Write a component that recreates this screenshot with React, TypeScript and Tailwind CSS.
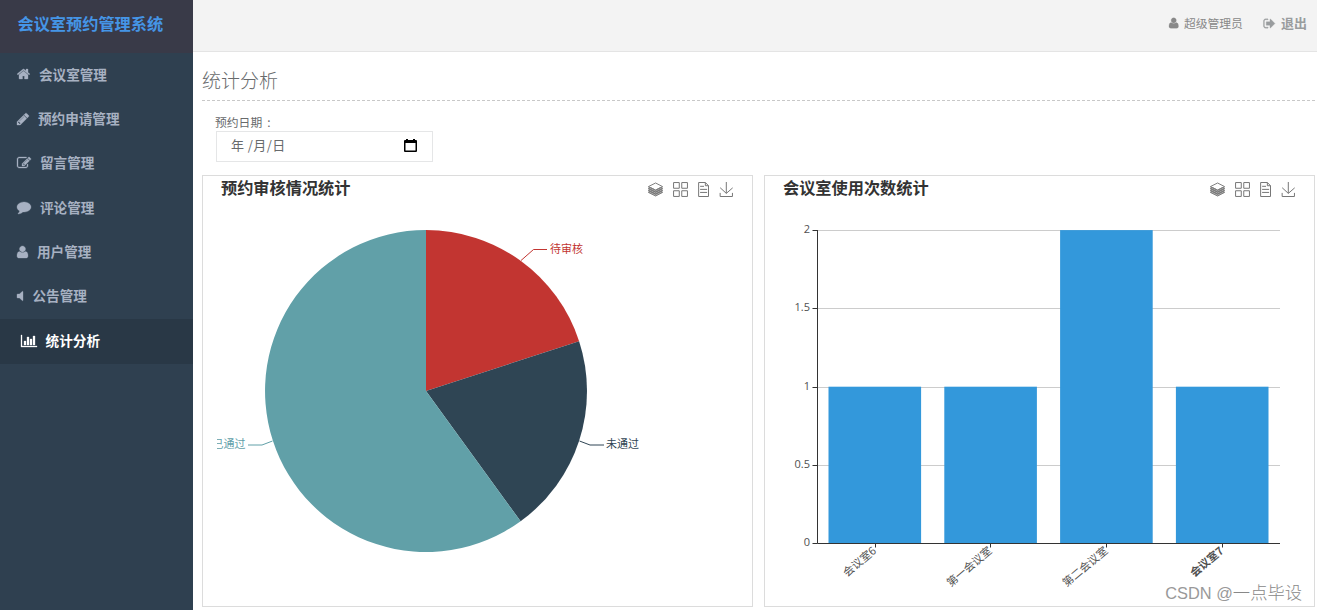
import React, { useState } from 'react';

// --- Icons ---
const ICONS = {
  home: { x: 64, w: 1664, d: 'M1472 992v480q0 26-19 45t-45 19h-384v-384h-256v384h-384q-26 0-45-19t-19-45v-480q0-1 .5-3t.5-3l575-474 575 474q1 2 1 6zm223-69l-62 74q-8 9-21 11h-3q-13 0-21-7l-692-577-692 577q-12 8-24 7-13-2-21-11l-62-74q-8-10-7-23.5t11-21.5l719-599q32-26 76-26t76 26l244 204v-195q0-14 9-23t23-9h192q14 0 23 9t9 23v408l219 182q10 8 11 21.5t-7 23.5z' },
  pencil: { x: 128, w: 1536, d: 'M491 1536l91-91-235-235-91 91v107h128v128h107zm523-928q0-22-22-22-10 0-17 7l-542 542q-7 7-7 17 0 22 22 22 10 0 17-7l542-542q7-7 7-17zm-54-192l416 416-832 832h-416v-416zm683 96q0 53-37 90l-166 166-416-416 166-165q36-38 90-38 53 0 91 38l235 234q37 39 37 91z' },
  edit: { x: 0, w: 1792, d: 'M888 1184l116-116-152-152-116 116v56h96v96h56zm440-720q-16-16-33 1l-350 350q-17 17-1 33t33-1l350-350q17-17 1-33zm80 594v190q0 119-84.5 203.5t-203.5 84.5h-832q-119 0-203.5-84.5t-84.5-203.5v-832q0-119 84.5-203.5t203.5-84.5h832q63 0 117 25 15 7 18 23 3 17-9 29l-49 49q-14 14-32 8-23-6-45-6h-832q-66 0-113 47t-47 113v832q0 66 47 113t113 47h832q66 0 113-47t47-113v-126q0-13 9-22l64-64q15-15 35-7t20 29zm-96-738l288 288-672 672h-288v-288zm444 132l-92 92-288-288 92-92q28-28 68-28t68 28l152 152q28 28 28 68t-28 68z' },
  comment: { x: 0, w: 1792, d: 'M1792 896q0 174-120 321.5t-326 233-450 85.5q-70 0-145-8-198 175-460 242-49 14-114 22-17 2-30.5-9t-17.5-29v-1q-3-4-.5-12t2-10 4.5-9.5l6-9 7-8.5 8-9q7-8 31-34.5t34.5-38 31-39.5 32.5-51 27-59 26-76q-157-89-247.5-220t-90.5-281q0-130 71-248.5t191-204.5 286-136.5 348-50.5q244 0 450 85.5t326 233 120 321.5z' },
  user: { x: 192, w: 1408, d: 'M1600 1405q0 120-73 189.5t-194 69.5h-874q-121 0-194-69.5t-73-189.5q0-53 3.5-103.5t14-109 26.5-108.5 43-97.5 62-81 85.5-53.5 111.5-20q9 0 42 21.5t74.5 48 108 48 133.5 21.5 133.5-21.5 108-48 74.5-48 42-21.5q61 0 111.5 20t85.5 53.5 62 81 43 97.5 26.5 108.5 14 109 3.5 103.5zm-320-893q0 159-112.5 271.5t-271.5 112.5-271.5-112.5-112.5-271.5 112.5-271.5 271.5-112.5 271.5 112.5 112.5 271.5z' },
  volume: { x: 512, w: 832, d: 'M1280 352v1088q0 26-19 45t-45 19-45-19l-333-333h-262q-26 0-45-19t-19-45v-384q0-26 19-45t45-19h262l333-333q19-19 45-19t45 19 19 45z' },
  chart: { x: 0, w: 2048, d: 'M640 896v512h-256v-512h256zm384-512v1024h-256v-1024h256zm1024 1152v128h-2048v-1536h128v1408h1920zm-640-896v768h-256v-768h256zm384-384v1152h-256v-1152h256z' },
  signOut: { x: 0, w: 1664, d: 'M704 1440q0 4 1 20t.5 26.5-3 23.5-10 19.5-20.5 6.5h-320q-119 0-203.5-84.5t-84.5-203.5v-704q0-119 84.5-203.5t203.5-84.5h320q13 0 22.5 9.5t9.5 22.5q0 4 1 20t.5 26.5-3 23.5-10 19.5-20.5 6.5h-320q-66 0-113 47t-47 113v704q0 66 47 113t113 47h312l11.5 1 11.5 3 8 5.5 7 9 2 13.5zm928-544q0 26-19 45l-544 544q-19 19-45 19t-45-19-19-45v-288h-448q-26 0-45-19t-19-45v-384q0-26 19-45t45-19h448v-288q0-26 19-45t45-19 45 19l544 544q19 19 19 45z' },
};

type IconName = keyof typeof ICONS;

const Icon: React.FC<{ name: IconName; size?: number }> = ({ name, size = 14 }) => {
  const { x, w, d } = ICONS[name];
  return (
    <svg className="shrink-0 overflow-visible" width={(w / 1792) * size} height={size} viewBox={`${x} 0 ${w} 1792`} fill="currentColor" stroke="currentColor" strokeWidth="40">
      <path d={d} />
    </svg>
  );
};

const menu: { icon: IconName; label: string }[] = [
  { icon: 'home', label: '会议室管理' },
  { icon: 'pencil', label: '预约申请管理' },
  { icon: 'edit', label: '留言管理' },
  { icon: 'comment', label: '评论管理' },
  { icon: 'user', label: '用户管理' },
  { icon: 'volume', label: '公告管理' },
  { icon: 'chart', label: '统计分析' },
];

// --- Chart toolbox ---
const Toolbox: React.FC = () => (
  <div className="flex items-center text-[#777]">
    <svg className="w-[15px] h-[15px] mr-[10px]" viewBox="-2 0 64 60" fill="none" stroke="currentColor" strokeWidth="4">
      <path d="M-.2 17.5V42.5L30.4 57.8 60 42.5V17.5L30.4 32.7Z" fill="currentColor" fillOpacity="0.6" stroke="none" />
      <path d="M8.2,38.4l-8.4,4.1l30.6,15.3L60,42.5l-8.1-4.1l-21.5,11L8.2,38.4z M51.9,30l-8.1,4.2l-13.4,6.9l-13.9-6.9L8.2,30l-8.4,4.2l8.4,4.2l22.2,11l21.5-11l8.1-4.2L51.9,30z M51.9,21.7l-8.1,4.2L35.7,30l-5.3,2.8L24.9,30l-8.4-4.1l-8.3-4.2l-8.4,4.2L8.2,30l8.3,4.2l13.9,6.9l13.4-6.9l8.1-4.2l8.1-4.1L51.9,21.7zM30.4,2.2L-0.2,17.5l8.4,4.1l8.3,4.2l8.4,4.2l5.5,2.7l5.3-2.7l8.1-4.2l8.1-4.2l8.1-4.1L30.4,2.2z" />
    </svg>
    <svg className="w-[15px] h-[15px] mr-[9px]" viewBox="0 0 60 60" fill="none" stroke="currentColor" strokeWidth="4">
      <path d="M2.3,2.2h22.8V25H2.3V2.2z M35,2.2h22.8V25H35V2.2zM2.3,35h22.8v22.8H2.3V35z M35,35h22.8v22.8H35V35z" />
    </svg>
    <svg className="w-[13px] h-[15px] mr-[9px]" viewBox="5 0 52 60" fill="none" stroke="currentColor" strokeWidth="4">
      <path d="M17.5,17.3H33 M45.4,29.5h-28 M11.5,2v56H51V14.8L38.4,2H11.5z M38.4,2.2v12.7H51 M45.4,41.7h-28" />
    </svg>
    <svg className="w-[15px] h-[15px]" viewBox="0 0 60 60" fill="none" stroke="currentColor" strokeWidth="4">
      <path d="M4.7,22.9L29.3,45.5L54.7,23.4M4.6,43.6L4.6,58L53.8,58L53.8,43.6M29.2,45.1L29.2,0" />
    </svg>
  </div>
);

const Panel: React.FC<{ title: string; children: React.ReactNode }> = ({ title, children }) => (
  <section className="w-[551px] h-[432px] border border-[#dcdcdc] overflow-hidden">
    <div className="h-[26px] pl-[18px] pr-[18px] flex items-center justify-between">
      <h2 className="pb-1 text-[16.2px] leading-[22px] font-bold text-[#333]">{title}</h2>
      <Toolbox />
    </div>
    {children}
  </section>
);

const PieChart: React.FC = () => (
  <svg className="block" width="549" height="404" viewBox="203 202 549 404" fontSize="11">
    <path d="M426 391V230A161 161 0 0 1 579.1 341.2Z" fill="#c23531" />
    <path d="M426 391L579.1 341.2A161 161 0 0 1 520.6 521.3Z" fill="#2f4554" />
    <path d="M426 391L520.6 521.3A161 161 0 1 1 426 230Z" fill="#61a0a8" />
    <path d="M521 260.5L533.5 249.5H547" fill="none" stroke="#c23531" />
    <path d="M579.5 441L590 445H604" fill="none" stroke="#2f4554" />
    <path d="M272.5 441L262 445H248" fill="none" stroke="#61a0a8" />
    <text x="550" y="252.5" fill="#c23531">待审核</text>
    <text x="606" y="448" fill="#2f4554">未通过</text>
    {/* the label is cut off at the canvas edge */}
    <svg x="217" y="434" width="40" height="20">
      <text x="-4.5" y="14" fill="#61a0a8">已通过</text>
    </svg>
  </svg>
);

const rooms = [
  { name: '会议室6', count: 1 },
  { name: '第一会议室', count: 1 },
  { name: '第二会议室', count: 2 },
  { name: '会议室7', count: 1, bold: true },
];

const BarChart: React.FC = () => (
  <svg className="block" width="549" height="404" viewBox="765 202 549 404" fontSize="11" fill="#505050">
    {[0.5, 1, 1.5, 2].map(v => (
      <path key={v} d={`M818 ${Math.round(543 - v * 156.5) + 0.5}H1280`} stroke="#ccc" />
    ))}
    {rooms.map((r, i) => (
      <rect key={r.name} x={828.5 + i * 115.8} y={543.3 - r.count * 156.6} width="92.6" height={r.count * 156.6} fill="#3398db" />
    ))}
    {[0, 0.5, 1, 1.5, 2].map(v => {
      const y = Math.round(543 - v * 156.5);
      return (
        <g key={v}>
          <path d={`M812.5 ${y + 0.5}H817.5`} stroke="#333" />
          <text x="810" y={y + 3} textAnchor="end" fontFamily="'Open Sans', sans-serif">{v}</text>
        </g>
      );
    })}
    <path d="M817.5 230V543.5H1280" fill="none" stroke="#333" />
    {rooms.map((r, i) => {
      const x = 875 + i * 115.8;
      return (
        <g key={r.name}>
          <path d={`M${Math.floor(x) + 0.5} 544V547.5`} stroke="#333" />
          <text transform={`translate(${x + 2} 552) rotate(-40)`} textAnchor="end" fontWeight={r.bold ? 700 : 400}>{r.name}</text>
        </g>
      );
    })}
  </svg>
);

const App: React.FC = () => {
  const [active, setActive] = useState<string>('统计分析');

  return (
    <div className="relative flex h-[610px] w-[1317px] overflow-hidden bg-white font-['Noto_Sans_CJK_SC',sans-serif] text-[#676a6c]">
      {/* Sidebar */}
      <aside className="w-[193px] shrink-0 bg-[#2f4050]">
        <div className="h-[53px] pl-[17.5px] pb-[7px] flex items-center bg-[#393a48] text-[16.2px] font-bold text-[#4595e6]">会议室预约管理系统</div>
        <nav>
          {menu.map(item => (
            <button
              key={item.label}
              onClick={() => setActive(item.label)}
              className={`w-full h-[44.4px] pb-0.5 flex items-center gap-[9px] text-[13.6px] font-bold ${active === item.label ? 'pl-[21px] bg-[#293846] text-white' : 'pl-[17.4px] text-[#a7b1c2]'}`}
            >
              <Icon name={item.icon} />
              <span className="-ml-[0.4px] pb-px">{item.label}</span>
            </button>
          ))}
        </nav>
      </aside>

      <div className="flex-1 min-w-0">
        {/* Top bar */}
        <header className="h-[52px] pr-[10px] pb-[5px] flex items-center justify-end bg-[#f3f3f3] border-b border-[#e4e4e4] text-[#888]">
          <div className="flex items-center gap-1.5 text-[11.8px]">
            <Icon name="user" size={12} />
            <span className="pb-px">超级管理员</span>
          </div>
          <button className="ml-5 flex items-center gap-1.5 text-[13px] font-bold text-[#999c9e]">
            <Icon name="signOut" size={13} />
            <span className="pb-px">退出</span>
          </button>
        </header>

        <main className="pl-[9px] pr-0.5">
          <h1 className="h-[49px] pt-[14px] border-b border-dashed border-[#c8c8c8] text-[19px] leading-7 font-light">统计分析</h1>
          <div className="h-[74px] pl-[14px] pt-[12px]">
            <label className="block h-[18px] -ml-px text-[11.8px] leading-[17px]">预约日期<span className="pl-[5px]">:</span></label>
            <div className="w-[217px] h-[31px] pl-[14px] pr-[15px] pb-0.5 flex items-center justify-between border border-[#e5e6e7] text-[13px]">
              <span className="pb-0.5 tracking-[0.45px]">年 /月/日</span>
              <svg width="13" height="15" viewBox="0 0 13 15" fill="#000">
                <path d="M2 1h2v1h5V1h2v1h1q1 0 1 1v10q0 1-1 1H1q-1 0-1-1V3q0-1 1-1h1zM1.5 5v7.5h10V5z" fillRule="evenodd" />
              </svg>
            </div>
          </div>
          <div className="flex gap-[11px]">
            <Panel title="预约审核情况统计">
              <PieChart />
            </Panel>
            <Panel title="会议室使用次数统计">
              <BarChart />
            </Panel>
          </div>
        </main>
      </div>

      {/* Watermark */}
      <div className="absolute right-[15px] bottom-[5px] text-[17.3px] leading-6 font-light text-[#888]">
        <span className="font-['Liberation_Sans',sans-serif] text-[16.4px] text-[#999]">CSDN @</span>一点毕设
      </div>
    </div>
  );
};

export default App;
